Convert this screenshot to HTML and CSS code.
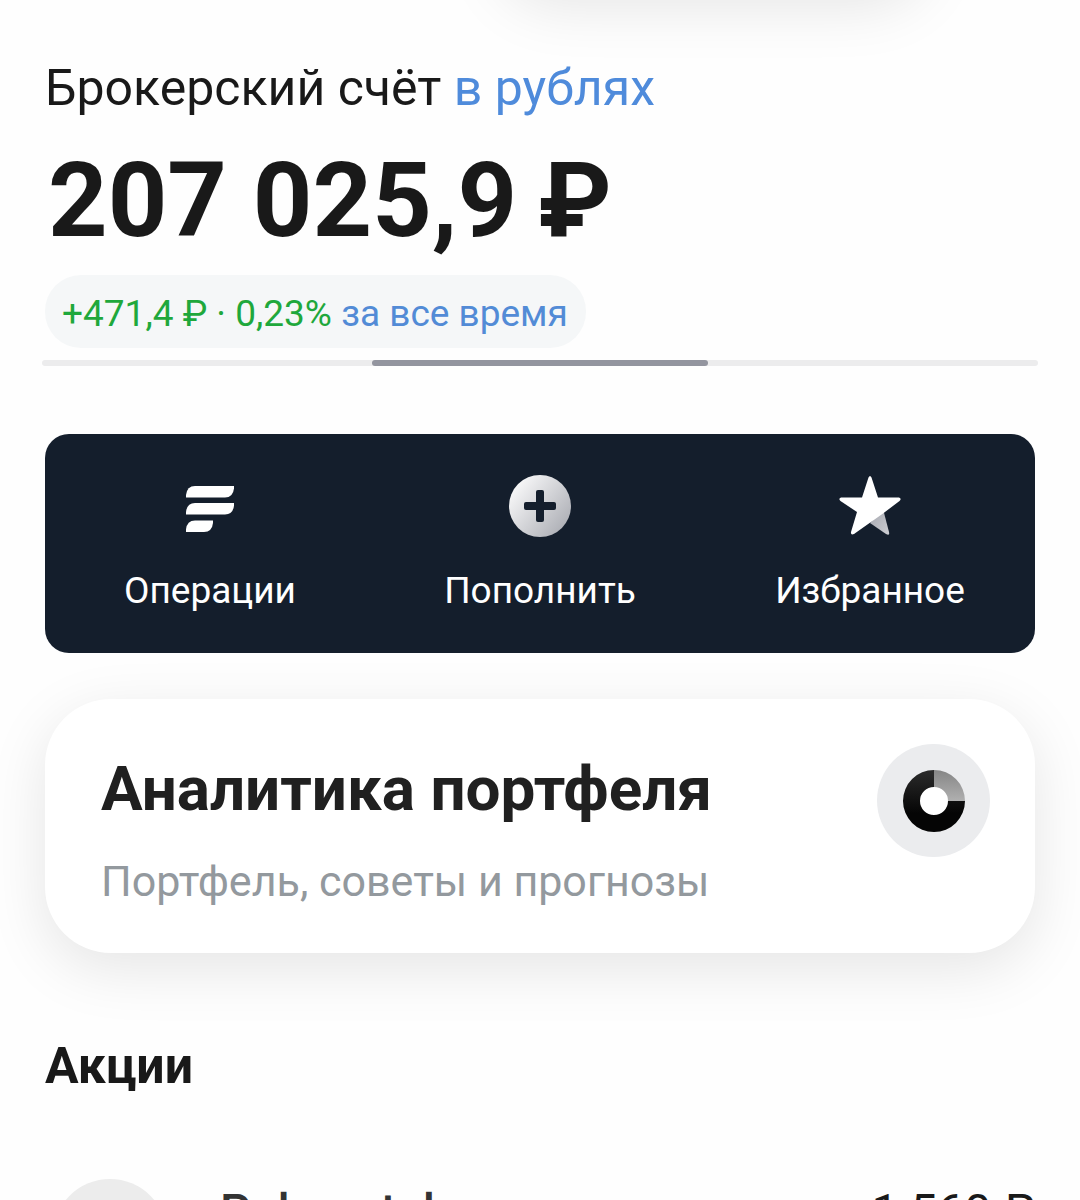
FILE: index.html
```html
<!DOCTYPE html>
<html lang="ru">
<head>
    <meta charset="UTF-8">
    <meta name="viewport" content="width=device-width, initial-scale=1.0">
    <title>Брокерский счёт</title>
    <link rel="stylesheet" href="styles.css">
</head>
<body>
    <div class="top-card"></div>

    <main class="page">
        <section class="account">
            <h1 class="account-title">Брокерский счёт <a href="#currency">в рублях</a></h1>
            <div class="account-total">207 025,9&thinsp;₽</div>
            <button type="button" class="account-yield">
                <span class="gain">+471,4 ₽ · 0,23%</span> за все время
            </button>
        </section>

        <div class="pager">
            <span></span>
            <span class="active"></span>
            <span></span>
        </div>

        <nav class="actions">
            <button type="button" class="action">
                <svg width="66" height="66" viewBox="0 0 66 66" aria-hidden="true">
                    <g fill="#fff">
                        <path d="M9 24.500v-2.500Q10 13 18 13h39v2.500Q56 24.500 48 24.500z"/>
                        <path d="M9 41.500v-2.500Q10 30 18 30h39v2.500Q56 41.500 48 41.500z"/>
                        <path d="M9 59v-2.500Q10 47.500 18 47.500h18v2.500Q35 59 27 59z"/>
                    </g>
                </svg>
                Операции
            </button>
            <button type="button" class="action">
                <svg width="66" height="66" viewBox="0 0 66 66" aria-hidden="true">
                    <defs>
                        <linearGradient id="plusFill" x1="0" y1="0.1" x2="1" y2="0.9">
                            <stop offset="0.1" stop-color="#f7f7f8"/>
                            <stop offset="1" stop-color="#a7a9b0"/>
                        </linearGradient>
                    </defs>
                    <circle cx="33" cy="33" r="31" fill="url(#plusFill)"/>
                    <rect x="29" y="17" width="8" height="32" rx="2" fill="#141e2c"/>
                    <rect x="17" y="29" width="32" height="8" rx="2" fill="#141e2c"/>
                </svg>
                Пополнить
            </button>
            <button type="button" class="action">
                <svg width="66" height="66" viewBox="0 0 66 66" aria-hidden="true">
                    <defs>
                        <linearGradient id="starFill" x1="0" y1="0" x2="1" y2="1">
                            <stop offset="0" stop-color="#a4a6ae"/>
                            <stop offset="1" stop-color="#cdced3"/>
                        </linearGradient>
                    </defs>
                    <path d="M33 50L46 36L52 59Q53 63 49 61z" fill="url(#starFill)"/>
                    <path d="M31.500 4.500Q33 1.500 34.500 4.500L41 24.500L62 24.500Q65 25.500 62.500 28L46 40.500L17 61Q13.500 62.500 14 59L20 39L3.500 28Q1 25.500 4 24.500L25 24.500z" fill="#fff"/>
                </svg>
                Избранное
            </button>
        </nav>

        <a href="#analytics" class="analytics">
            <div class="analytics-text">
                <h2>Аналитика портфеля</h2>
                <p>Портфель, советы и прогнозы</p>
            </div>
            <span class="analytics-icon">
                <svg width="64" height="64" viewBox="0 0 64 64" aria-hidden="true">
                    <defs>
                        <linearGradient id="ringDark" x1="0" y1="0" x2="0" y2="1">
                            <stop offset="0" stop-color="#2b2b2b"/>
                            <stop offset="0.7" stop-color="#050505"/>
                        </linearGradient>
                        <linearGradient id="ringLight" x1="0" y1="0" x2="0" y2="1">
                            <stop offset="0" stop-color="#858585"/>
                            <stop offset="1" stop-color="#b0b0b0"/>
                        </linearGradient>
                    </defs>
                    <circle cx="32" cy="32" r="15" fill="#fff"/>
                    <path d="M32 1A31 31 0 1 0 63 32H46A14 14 0 1 1 32 18z" fill="url(#ringDark)"/>
                    <path d="M32 1A31 31 0 0 1 63 32H46A14 14 0 0 0 32 18z" fill="url(#ringLight)"/>
                </svg>
            </span>
        </a>

        <section class="stocks">
            <h2>Акции</h2>
            <div class="stock">
                <span class="stock-logo"></span>
                <span class="stock-name">Polymetal</span>
                <span class="stock-price">1 560 ₽</span>
            </div>
        </section>
    </main>
</body>
</html>
```

FILE: styles.css
```css
* {
    box-sizing: border-box;
}
body {
    margin: 0;
    height: 100vh;
    overflow: hidden;
    background: #fefefe;
    color: #191919;
    font-family: Roboto, "Noto Sans", sans-serif;
}
h1, h2, p {
    margin: 0;
}
a {
    color: inherit;
    text-decoration: none;
}
button {
    border: none;
    font-family: inherit;
    cursor: pointer;
}

/* bottom edge of the card scrolled off the top, only its shadow shows */
.top-card {
    position: absolute;
    top: -208px;
    left: 46%;
    right: 14%;
    height: 200px;
    border-radius: 60px;
    box-shadow: 0 14px 60px rgba(0, 0, 0, 0.1);
}
.page {
    padding: 58px 45px 0;
}

.account-title {
    font-size: 50px;
    line-height: 60px;
    font-weight: 400;
}
.account-title a {
    color: #4f8bdb;
}
.account-total {
    margin-top: 21px;
    padding-left: 3px;
    font-size: 104px;
    line-height: 124px;
    font-weight: 700;
}
.account-yield {
    display: block;
    margin-top: 12px;
    padding: 5px 18px 0 17px;
    border-radius: 36px;
    background: #f5f7f8;
    color: #528bd6;
    font-size: 37px;
    line-height: 68px;
}
.gain {
    color: #1fa83c;
}

.pager {
    display: flex;
    margin: 12px -3px 0;
    border-radius: 3px;
    background: #ececed;
}
.pager span {
    flex: 1;
    height: 6px;
    border-radius: 3px;
}
.pager .active {
    margin: 0 -6px;
    background: #93959f;
}

.actions {
    display: flex;
    margin-top: 68px;
    border-radius: 24px;
    background: #141e2c;
}
.action {
    flex: 1;
    display: flex;
    flex-direction: column;
    align-items: center;
    gap: 30px;
    padding: 39px 0 40px;
    background: none;
    color: #fff;
    font-size: 37px;
    line-height: 44px;
}

.analytics {
    display: flex;
    justify-content: space-between;
    margin-top: 46px;
    padding: 45px 45px 46px 56px;
    border-radius: 66px;
    background: #fff;
    box-shadow: 0 16px 60px rgba(0, 0, 0, 0.1);
}
.analytics h2 {
    margin-top: 9px;
    color: #202020;
    font-size: 62px;
    line-height: 72px;
}
.analytics p {
    margin-top: 30px;
    color: #93999e;
    font-size: 43px;
    line-height: 52px;
}
.analytics-icon {
    display: flex;
    align-items: center;
    justify-content: center;
    width: 113px;
    height: 113px;
    border-radius: 50%;
    background: #ebecee;
}

.stocks {
    margin-top: 83px;
}
.stocks h2 {
    font-size: 50px;
    line-height: 60px;
}
.stock {
    display: flex;
    align-items: flex-start;
    margin-top: 83px;
    padding-left: 8px;
    font-size: 48px;
    line-height: 56px;
}
.stock-logo {
    width: 114px;
    height: 114px;
    border-radius: 50%;
    background: #ececec;
}
.stock-name {
    flex: 1;
    margin: 5px 0 0 53px;
    color: #333;
    font-weight: 500;
}
.stock-price {
    margin-top: 5px;
}
```
